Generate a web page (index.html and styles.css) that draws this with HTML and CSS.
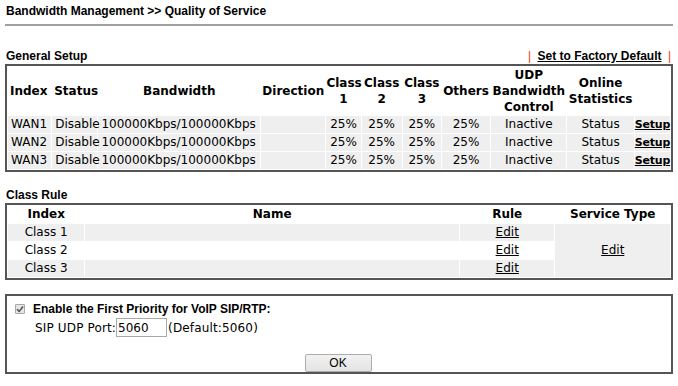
FILE: index.html
```html
<!DOCTYPE html>
<html>
<head>
<meta charset="utf-8">
<link rel="stylesheet" href="styles.css">
</head>
<body>
<div class="page">
  <div class="title">Bandwidth Management &gt;&gt; Quality of Service</div>
  <div class="rule-line"></div>

  <div class="section-head">
    <span class="label">General Setup</span>
    <span class="links"><span class="bar">|</span> <a href="#">Set to Factory Default</a> <span class="bar bar-r">|</span></span>
  </div>
  <table class="grid general">
    <colgroup>
      <col class="c-index"><col class="c-status"><col class="c-bw"><col class="c-dir"><col class="c-cls1"><col class="c-cls2"><col class="c-cls3"><col class="c-oth"><col class="c-udp"><col class="c-onl"><col class="c-set">
    </colgroup>
    <tr class="head">
      <th class="l">Index</th><th class="l">Status</th><th>Bandwidth</th><th>Direction</th><th>Class<br>1</th><th>Class<br>2</th><th>Class<br>3</th><th>Others</th><th>UDP<br>Bandwidth<br>Control</th><th>Online<br>Statistics</th><th></th>
    </tr>
    <tr class="row">
      <td>WAN1</td><td>Disable</td><td>100000Kbps/100000Kbps</td><td></td><td class="c">25%</td><td class="c">25%</td><td class="c">25%</td><td class="c">25%</td><td class="c">Inactive</td><td class="c">Status</td><td class="c"><a class="bold" href="#">Setup</a></td>
    </tr>
    <tr class="row">
      <td>WAN2</td><td>Disable</td><td>100000Kbps/100000Kbps</td><td></td><td class="c">25%</td><td class="c">25%</td><td class="c">25%</td><td class="c">25%</td><td class="c">Inactive</td><td class="c">Status</td><td class="c"><a class="bold" href="#">Setup</a></td>
    </tr>
    <tr class="row">
      <td>WAN3</td><td>Disable</td><td>100000Kbps/100000Kbps</td><td></td><td class="c">25%</td><td class="c">25%</td><td class="c">25%</td><td class="c">25%</td><td class="c">Inactive</td><td class="c">Status</td><td class="c"><a class="bold" href="#">Setup</a></td>
    </tr>
  </table>

  <div class="section-head second">
    <span class="label">Class Rule</span>
  </div>
  <table class="grid classrule">
    <colgroup>
      <col class="r-index"><col class="r-name"><col class="r-rule"><col class="r-svc">
    </colgroup>
    <tr class="head">
      <th>Index</th><th>Name</th><th>Rule</th><th>Service Type</th>
    </tr>
    <tr class="row">
      <td class="c">Class 1</td><td></td><td class="c"><a href="#">Edit</a></td><td class="c svc" rowspan="3"><a href="#">Edit</a></td>
    </tr>
    <tr class="row white">
      <td class="c">Class 2</td><td></td><td class="c"><a href="#">Edit</a></td>
    </tr>
    <tr class="row">
      <td class="c">Class 3</td><td></td><td class="c"><a href="#">Edit</a></td>
    </tr>
  </table>

  <div class="voip">
    <label class="check-line"><input class="chk" type="checkbox" checked><span>Enable the First Priority for VoIP SIP/RTP:</span></label>
    <div class="port-line">SIP UDP Port:<input class="port" type="text" value="5060">(Default:5060)</div>
    <div class="btn-line"><button class="ok">OK</button></div>
  </div>
</div>
</body>
</html>
```
FILE: styles.css
```css
html, body {
  margin: 0;
  padding: 0;
  background: #fff;
}
.page {
  padding: 0 5px;
  width: 668px;
  font-family: "DejaVu Sans", Verdana, sans-serif;
  font-size: 12px;
  color: #000;
}
.title {
  font-family: "Liberation Sans", Arial, sans-serif;
  font-weight: bold;
  font-size: 12px;
  padding: 4px 0 0 1px;
  height: 17px;
}
.rule-line {
  height: 0;
  border-top: 2px solid #a0a0a0;
  margin-top: 3px;
}
.section-head {
  display: flex;
  justify-content: space-between;
  align-items: flex-end;
  font-family: "Liberation Sans", Arial, sans-serif;
  font-weight: bold;
  font-size: 12px;
  margin-top: 22px;
  height: 15px;
  padding-left: 1px;
}
.section-head.second {
  margin-top: 15px;
}
.links a {
  color: #000;
  text-decoration: underline;
}
.bar {
  color: #ff3300;
  font-weight: normal;
  margin-right: 3px;
}
.bar-r {
  margin-left: 3px;
  margin-right: 2px;
}
.grid {
  width: 668px;
  border: 2px solid #555;
  border-collapse: separate;
  border-spacing: 1px;
  table-layout: fixed;
  margin-top: 1px;
}
.grid th {
  font-weight: bold;
  text-align: center;
  padding: 0;
  line-height: 16px;
  white-space: nowrap;
}
.grid th.l {
  text-align: left;
  padding-left: 2px;
}
.grid td {
  padding: 0 0 0 3px;
  height: 17px;
  line-height: 17px;
  white-space: nowrap;
}
.grid td.c {
  text-align: center;
  padding: 0;
}
.general .row td { background: #efefef; }
.c-index { width: 43px; }
.c-status { width: 45px; }
.c-bw { width: 161px; }
.c-dir { width: 64px; }
.c-cls1 { width: 34px; }
.c-cls2 { width: 40px; }
.c-cls3 { width: 38px; }
.c-oth { width: 48px; }
.c-udp { width: 75px; }
.c-onl { width: 66px; }
.c-set { width: 35px; }
a {
  color: #000;
}
a.bold {
  font-weight: bold;
  font-size: 11px;
  letter-spacing: -0.2px;
}
.classrule .head th {
  height: 17px;
  line-height: 17px;
}
.classrule .row td { background: #efefef; }
.classrule .row.white td { background: #fff; }
.classrule .row td.svc { background: #efefef; }
.r-index { width: 76px; }
.r-name { width: 372px; }
.r-rule { width: 94px; }
.r-svc { width: 114px; }
.voip {
  margin-top: 14px;
  border: 2px solid #555;
  height: 80px;
  box-sizing: border-box;
  font-family: "Liberation Sans", Arial, sans-serif;
  font-size: 12px;
  padding: 5px 0 0 6px;
}
.check-line {
  display: flex;
  align-items: center;
  font-weight: bold;
  height: 16px;
}
.chk {
  appearance: none;
  -webkit-appearance: none;
  margin: 0 8px 0 2px;
  width: 10px;
  height: 10px;
  border: 1px solid #a8a8a8;
  border-radius: 1px;
  background: #e6e6e6 url("data:image/svg+xml,%3Csvg xmlns='http://www.w3.org/2000/svg' viewBox='0 0 10 10'%3E%3Cpath d='M2 5.2 L4.2 7.4 L8 2.6' fill='none' stroke='%23555' stroke-width='1.6'/%3E%3C/svg%3E") center / 10px 10px no-repeat;
}
.port-line {
  font-family: "DejaVu Sans", Verdana, sans-serif;
  font-size: 12px;
  letter-spacing: 0.15px;
  margin-top: 1px;
  padding-left: 22px;
  display: flex;
  align-items: center;
  height: 19px;
}
.port {
  width: 51px;
  height: 19px;
  box-sizing: border-box;
  border: 1px solid #a9a9a9;
  font-family: "DejaVu Sans", Verdana, sans-serif;
  font-size: 12px;
  padding: 1px 1px;
  margin: 0 1px 0 0;
}
.btn-line {
  display: flex;
  justify-content: center;
  margin-top: 17px;
  padding-right: 8px;
}
.ok {
  width: 67px;
  height: 18px;
  font-family: "Liberation Sans", Arial, sans-serif;
  font-size: 12px;
  border: 1px solid #acacac;
  border-radius: 2px;
  background: linear-gradient(#f2f2f2, #e4e4e4);
  padding: 0;
  color: #000;
}
```
